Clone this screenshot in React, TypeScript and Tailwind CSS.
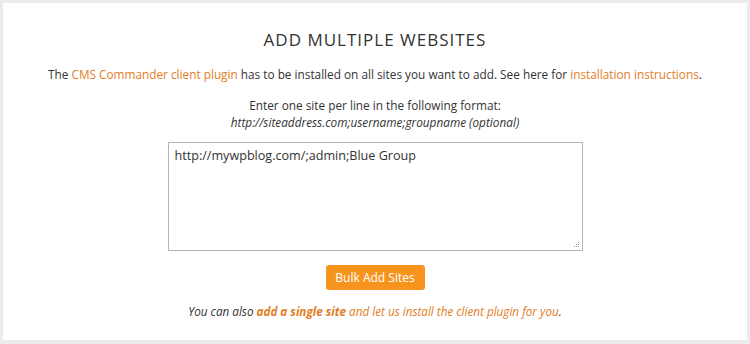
import React from 'react'

const App: React.FC = () => {
    return (
        <div className="w-[750px] h-[344px] bg-[#ececec] p-[3px] pb-[4px]" style={{ fontFamily: '"Open Sans", sans-serif' }}>
            <div className="h-full bg-white flex flex-col items-center text-[#333]">
                <h1 className="mt-[25px] text-[17px] leading-[24px] tracking-[1px] text-[#333]">ADD MULTIPLE WEBSITES</h1>
                <p className="mt-[13px] text-[11.8px] leading-[18px]">
                    The <a className="text-[#e27d25]">CMS Commander client plugin</a> has to be installed on all sites you want to add. See here for{' '}
                    <a className="text-[#e27d25]">installation instructions</a>.
                </p>
                <p className="mt-[13px] text-[11.8px] leading-[18px]">Enter one site per line in the following format:</p>
                <p className="text-[11.8px] leading-[17px] italic">http://siteaddress.com;username;groupname (optional)</p>
                <div className="relative mt-[11px] w-[415px] h-[109px] border border-[#b5b5b5] px-[6px] pt-[3px]">
                    <p className="text-[12.6px] leading-[20px] text-[#333]">http://mywpblog.com/;admin;Blue Group</p>
                    <svg className="absolute right-[2px] bottom-[2px]" width="6" height="6" viewBox="0 0 6 6">
                        <rect x="4" y="0" width="1" height="1" fill="#999" />
                        <rect x="2" y="2" width="1" height="1" fill="#999" />
                        <rect x="4" y="2" width="1" height="1" fill="#999" />
                        <rect x="0" y="4" width="1" height="1" fill="#999" />
                        <rect x="2" y="4" width="1" height="1" fill="#999" />
                        <rect x="4" y="4" width="1" height="1" fill="#999" />
                    </svg>
                </div>
                <button className="mt-[14px] w-[99px] h-[25px] rounded-[3px] bg-[#f7941e] text-white text-[12px] leading-[25px]">
                    Bulk Add Sites
                </button>
                <p className="mt-[12px] text-[11.7px] leading-[18px] italic text-[#333]">
                    You can also <a className="font-bold text-[#e27d25]">add a single site</a>{' '}
                    <span className="text-[#e27d25]">and let us install the client plugin for you</span>.
                </p>
            </div>
        </div>
    )
}

export default App
